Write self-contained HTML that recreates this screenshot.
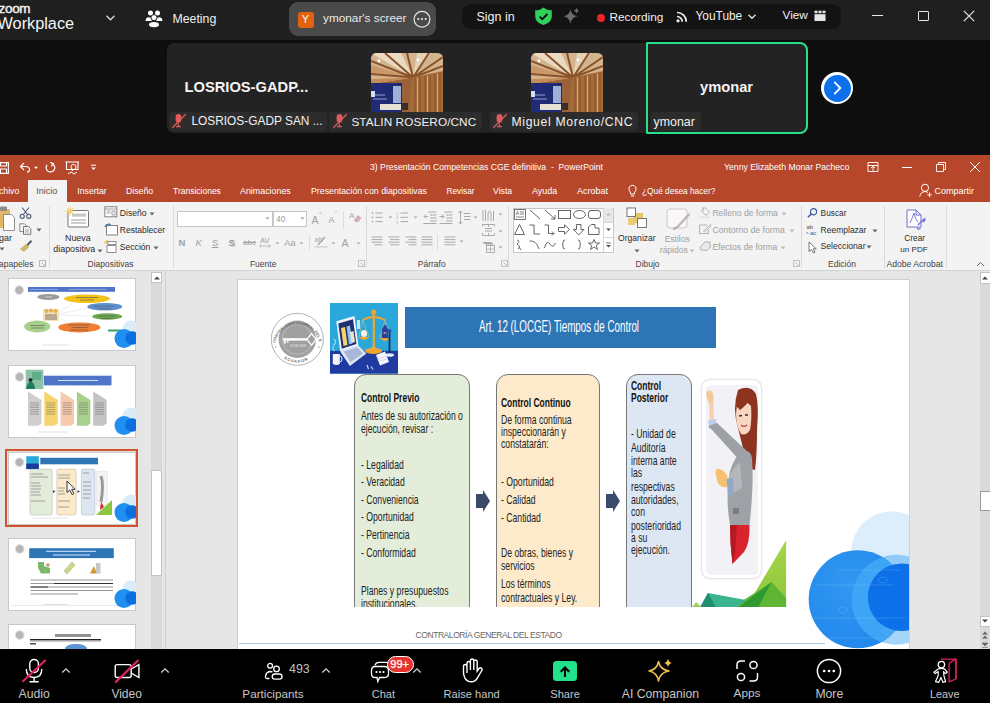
<!DOCTYPE html>
<html><head><meta charset="utf-8">
<style>
*{margin:0;padding:0;box-sizing:border-box}
html,body{width:990px;height:703px;overflow:hidden;background:#0e0e0e;font-family:"Liberation Sans",sans-serif}
.a{position:absolute}
.t{position:absolute;white-space:nowrap;line-height:1}
#top{left:0;top:0;width:990px;height:40px;background:#1f1f1f}
#gal{left:0;top:40px;width:990px;height:115px;background:#0e0e0e}
#ppt{left:0;top:155px;width:990px;height:494px;background:#e6e6e6;overflow:hidden}
#bot{left:0;top:649px;width:990px;height:54px;background:#000}
</style></head><body>
<div id="top" class="a">
  <div class="t" style="left:-1.5px;top:2px;font-size:13.5px;color:#f2f2f2;-webkit-text-stroke:0.45px #f2f2f2;letter-spacing:-0.3px">zoom</div>
  <div class="t" style="left:-2.5px;top:15px;font-size:16.3px;color:#f4f4f4">Workplace</div>
  <svg class="a" style="left:105px;top:14px" width="11" height="8" viewBox="0 0 11 8"><path d="M1.5 1.8 L5.5 5.8 L9.5 1.8" fill="none" stroke="#d8d8d8" stroke-width="1.3"/></svg>
  <svg class="a" style="left:144px;top:8px" width="20" height="22" viewBox="144 8 20 22">
    <circle cx="150.5" cy="12.9" r="2.5" fill="#fff"/><circle cx="157.5" cy="12.9" r="2.5" fill="#fff"/>
    <path d="M145.6 21 Q145.6 17.3 148.8 17.3 Q151.6 17.3 151.8 21Z" fill="#fff"/><path d="M156.2 21 Q156.4 17.3 159.2 17.3 Q162.4 17.3 162.4 21Z" fill="#fff"/>
    <circle cx="154" cy="17.6" r="3" fill="#fff" stroke="#1f1f1f" stroke-width="0.9"/>
    <ellipse cx="154" cy="24.6" rx="5" ry="2.6" fill="#fff"/>
  </svg>
  <div class="t" style="left:172.5px;top:12.8px;font-size:12.3px;color:#f0f0f0">Meeting</div>
  <div class="a" style="left:289px;top:2px;width:147px;height:33.5px;background:#4a4a4a;border-radius:9px"></div>
  <div class="a" style="left:297.5px;top:12px;width:16px;height:15.5px;background:#e4620f;border-radius:3px;color:#fff;font-size:11px;text-align:center;line-height:15.5px">Y</div>
  <div class="t" style="left:323px;top:13px;font-size:11.8px;color:#e8e8e8">ymonar's screer</div>
  <svg class="a" style="left:412px;top:9px" width="20" height="20" viewBox="0 0 20 20"><circle cx="10" cy="10.3" r="7.9" fill="none" stroke="#e6e6e6" stroke-width="1.2"/><circle cx="6.3" cy="10" r="1.1" fill="#e6e6e6"/><circle cx="10" cy="10" r="1.1" fill="#e6e6e6"/><circle cx="13.7" cy="10" r="1.1" fill="#e6e6e6"/></svg>
  <div class="a" style="left:462px;top:4px;width:379px;height:25.3px;background:#131313;border-radius:9px"></div>
  <div class="t" style="left:476.5px;top:11px;font-size:12.5px;color:#f0f0f0">Sign in</div>
  <svg class="a" style="left:534px;top:7px" width="19" height="19" viewBox="0 0 19 19"><path d="M9.5 0.5 C7 2.5 4.5 3.3 1.2 3.3 L1.2 9 C1.2 13.5 4.5 16.5 9.5 18 C14.5 16.5 17.8 13.5 17.8 9 L17.8 3.3 C14.5 3.3 12 2.5 9.5 0.5Z" fill="#2ed15a"/><path d="M5.6 9.6 L8.3 12.2 L13.4 7" fill="none" stroke="#101010" stroke-width="1.9"/></svg>
  <svg class="a" style="left:562px;top:7px" width="19" height="19" viewBox="0 0 19 19"><path d="M8.4 2.5 Q9.4 8.3 15.4 9.3 Q9.4 10.3 8.4 16.8 Q7.4 10.3 1.4 9.3 Q7.4 8.3 8.4 2.5Z" fill="#6c6c6c"/><path d="M14.5 0.8 Q15 3.2 17.2 3.7 Q15 4.2 14.5 6.6 Q14 4.2 11.8 3.7 Q14 3.2 14.5 0.8Z" fill="#6c6c6c"/></svg>
  <div class="a" style="left:597px;top:14px;width:8px;height:8px;border-radius:50%;background:#e8262b"></div>
  <div class="t" style="left:609.5px;top:11.7px;font-size:11.8px;color:#f0f0f0">Recording</div>
  <svg class="a" style="left:676px;top:11px" width="13" height="12" viewBox="0 0 13 12"><circle cx="2" cy="9.8" r="1.6" fill="#eee"/><path d="M1 5.5 A5.3 5.3 0 0 1 6.3 10.8" fill="none" stroke="#eee" stroke-width="1.7"/><path d="M1 1.5 A9.3 9.3 0 0 1 10.3 10.8" fill="none" stroke="#eee" stroke-width="1.7"/></svg>
  <div class="t" style="left:695.5px;top:10.5px;font-size:11.9px;color:#f0f0f0">YouTube</div>
  <svg class="a" style="left:747px;top:13px" width="10" height="8" viewBox="0 0 10 8"><path d="M1.5 1.8 L5 5.3 L8.5 1.8" fill="none" stroke="#e6e6e6" stroke-width="1.3"/></svg>
  <div class="t" style="left:782.5px;top:10px;font-size:11.8px;color:#f0f0f0">View</div>
  <svg class="a" style="left:814px;top:10px" width="12" height="12" viewBox="0 0 12 12"><rect x="0.5" y="0.7" width="3" height="2.5" fill="#e6e6e6"/><rect x="4.5" y="0.7" width="3" height="2.5" fill="#e6e6e6"/><rect x="8.5" y="0.7" width="3" height="2.5" fill="#e6e6e6"/><rect x="0.5" y="4.2" width="11" height="6.8" fill="#e6e6e6"/></svg>
  <div class="a" style="left:872px;top:15px;width:10.5px;height:1.3px;background:#e6e6e6"></div>
  <div class="a" style="left:918px;top:11px;width:10.5px;height:10px;border:1.2px solid #e6e6e6;border-radius:1px"></div>
  <svg class="a" style="left:963px;top:10px" width="12" height="12" viewBox="0 0 12 12"><path d="M0.8 0.8 L11.2 11.2 M11.2 0.8 L0.8 11.2" stroke="#e6e6e6" stroke-width="1.2"/></svg>
</div>
<div id="gal" class="a">
  <div class="a" style="left:167px;top:3px;width:641px;height:90px;background:#232323;border-radius:7px"></div>
  <div class="t" style="left:184.5px;top:39.5px;font-size:14.7px;font-weight:bold;color:#f4f4f4">LOSRIOS-GADP...</div>
  <svg class="a" style="left:371px;top:12.5px" width="72" height="60" viewBox="0 0 72 60">
  <defs><clipPath id="pc371"><path d="M0 6 Q0 0 6 0 H66 Q72 0 72 6 V60 H0Z"/></clipPath></defs>
  <g clip-path="url(#pc371)">
  <rect width="72" height="60" fill="#9a6236"/>
  <path d="M0 0 H72 V20 L42 24.5 L0 31Z" fill="#d4b48e"/>
  <path d="M42 24.5 L0 0 H30Z" fill="#eadac2"/><path d="M42 24.5 L46 0 H60Z" fill="#e6d2b6"/>
  <path d="M42 24.5 L0 12 V20Z" fill="#c99a68"/><path d="M42 24.5 L0 26 V31Z" fill="#c48c58"/>
  <g stroke="#8a532a" stroke-width="2"><path d="M42 24.5 L14 0 M42 24.5 L36 0 M42 24.5 L58 0 M42 24.5 L72 4 M42 24.5 L72 13 M42 24.5 L0 8 M42 24.5 L0 21"/></g>
  <path d="M41 24.5 L72 18 V60 H38Z" fill="#a56b3a"/>
  <path d="M44 25 V60 M49 24 V60 M54 23 V60 M59 22 V60 M64 21 V60 M69 20 V60" stroke="#8a552b" stroke-width="1.2"/>
  <path d="M46.5 24.5 V60 M56.5 23 V60 M66.5 20.5 V60" stroke="#d9ad7a" stroke-width="0.9"/>
  <rect x="0" y="30" width="31" height="30" fill="#1f2b72"/>
  <rect x="22" y="33" width="8" height="17" fill="#9fb0d8"/>
  <path d="M2 42 H14 M2 46 H16" stroke="#8fa0d8" stroke-width="1"/>
  <rect x="0" y="38" width="4" height="6" fill="#d8def0"/>
  <rect x="9" y="51" width="21" height="6" fill="#e6e0d4"/>
  <rect x="31" y="50" width="6" height="7" fill="#3a2e28"/>
  <circle cx="8" cy="8" r="1.4" fill="#fff"/><circle cx="47" cy="7" r="1.4" fill="#fff"/>
  </g></svg>
  <svg class="a" style="left:531px;top:12.5px" width="72" height="60" viewBox="0 0 72 60">
  <defs><clipPath id="pc531"><path d="M0 6 Q0 0 6 0 H66 Q72 0 72 6 V60 H0Z"/></clipPath></defs>
  <g clip-path="url(#pc531)">
  <rect width="72" height="60" fill="#9a6236"/>
  <path d="M0 0 H72 V20 L42 24.5 L0 31Z" fill="#d4b48e"/>
  <path d="M42 24.5 L0 0 H30Z" fill="#eadac2"/><path d="M42 24.5 L46 0 H60Z" fill="#e6d2b6"/>
  <path d="M42 24.5 L0 12 V20Z" fill="#c99a68"/><path d="M42 24.5 L0 26 V31Z" fill="#c48c58"/>
  <g stroke="#8a532a" stroke-width="2"><path d="M42 24.5 L14 0 M42 24.5 L36 0 M42 24.5 L58 0 M42 24.5 L72 4 M42 24.5 L72 13 M42 24.5 L0 8 M42 24.5 L0 21"/></g>
  <path d="M41 24.5 L72 18 V60 H38Z" fill="#a56b3a"/>
  <path d="M44 25 V60 M49 24 V60 M54 23 V60 M59 22 V60 M64 21 V60 M69 20 V60" stroke="#8a552b" stroke-width="1.2"/>
  <path d="M46.5 24.5 V60 M56.5 23 V60 M66.5 20.5 V60" stroke="#d9ad7a" stroke-width="0.9"/>
  <rect x="0" y="30" width="31" height="30" fill="#1f2b72"/>
  <rect x="22" y="33" width="8" height="17" fill="#9fb0d8"/>
  <path d="M2 42 H14 M2 46 H16" stroke="#8fa0d8" stroke-width="1"/>
  <rect x="0" y="38" width="4" height="6" fill="#d8def0"/>
  <rect x="9" y="51" width="21" height="6" fill="#e6e0d4"/>
  <rect x="31" y="50" width="6" height="7" fill="#3a2e28"/>
  <circle cx="8" cy="8" r="1.4" fill="#fff"/><circle cx="47" cy="7" r="1.4" fill="#fff"/>
  </g></svg>
  <div class="a" style="left:646px;top:2px;width:162px;height:91.5px;border:2px solid #27e08c;border-radius:1px 8px 8px 1px;background:#232323"></div>
  <div class="t" style="left:700px;top:40px;font-size:14.7px;font-weight:bold;color:#f4f4f4">ymonar</div>
  <div class="a" style="left:168.5px;top:71.5px;width:158.5px;height:19.5px;background:#2c2c2c;border-radius:4px"></div>
  <div class="a" style="left:329px;top:71.5px;width:153px;height:19.5px;background:#2c2c2c;border-radius:4px"></div>
  <div class="a" style="left:489.5px;top:71.5px;width:148px;height:19.5px;background:#2c2c2c;border-radius:4px"></div>
  <div class="a" style="left:650.5px;top:71.5px;width:50px;height:19.5px;background:#2c2c2c;border-radius:4px"></div>
  <svg class="a" style="left:172px;top:73px" width="15" height="16" viewBox="0 0 15 16"><rect x="3.6" y="1" width="5.7" height="8.6" rx="2.85" fill="#e25b5b"/><path d="M6.45 10.5 V13.2 M4 13.6 H8.9" stroke="#e25b5b" stroke-width="1.3"/><path d="M0.4 14.8 L13.6 1.2" stroke="#e25b5b" stroke-width="1.3"/></svg>
  <div class="t" style="left:191.4px;top:76.2px;font-size:11.9px;color:#f0f0f0">LOSRIOS-GADP SAN ...</div>
  <svg class="a" style="left:333px;top:73px" width="15" height="16" viewBox="0 0 15 16"><rect x="3.6" y="1" width="5.7" height="8.6" rx="2.85" fill="#e25b5b"/><path d="M6.45 10.5 V13.2 M4 13.6 H8.9" stroke="#e25b5b" stroke-width="1.3"/><path d="M0.4 14.8 L13.6 1.2" stroke="#e25b5b" stroke-width="1.3"/></svg>
  <div class="t" style="left:351.4px;top:76.2px;font-size:11.75px;letter-spacing:0.1px;color:#f0f0f0">STALIN ROSERO/CNC</div>
  <svg class="a" style="left:493px;top:73px" width="15" height="16" viewBox="0 0 15 16"><rect x="3.6" y="1" width="5.7" height="8.6" rx="2.85" fill="#e25b5b"/><path d="M6.45 10.5 V13.2 M4 13.6 H8.9" stroke="#e25b5b" stroke-width="1.3"/><path d="M0.4 14.8 L13.6 1.2" stroke="#e25b5b" stroke-width="1.3"/></svg>
  <div class="t" style="left:511.5px;top:76px;font-size:12.2px;letter-spacing:0.66px;color:#f0f0f0">Miguel Moreno/CNC</div>
  <div class="t" style="left:653.5px;top:76px;font-size:12.4px;color:#f0f0f0">ymonar</div>
  <div class="a" style="left:821px;top:32px;width:32px;height:32px;border-radius:50%;background:#fff"></div>
  <div class="a" style="left:823.5px;top:34.5px;width:27px;height:27px;border-radius:50%;background:#0e71eb"></div>
  <svg class="a" style="left:821px;top:32px" width="32" height="32" viewBox="0 0 32 32"><path d="M13.3 9.8 L19.3 16 L13.3 22.2" fill="none" stroke="#fff" stroke-width="1.8"/></svg>
</div>
<div id="ppt" class="a">
  <div class="a" style="left:0;top:0;width:990px;height:47px;background:#b7472a"></div>
  <!-- title bar icons -->
  <svg class="a" style="left:-2px;top:7px" width="12" height="12" viewBox="0 0 12 12"><path d="M0.6 0.6 H10.4 V11.4 H0.6Z M2.5 0.6 V4 H8.5 V0.6 M2.5 11.4 V7 H8.5 V11.4" fill="none" stroke="#fff" stroke-width="1.1"/></svg>
  <svg class="a" style="left:19px;top:7px" width="21" height="11" viewBox="0 0 21 11"><path d="M5 1 L1.5 4.5 L5 8 M1.5 4.5 H6.5 Q10.5 4.5 10.5 7.5 Q10.5 10 8 10.2" fill="none" stroke="#fff" stroke-width="1.2"/><path d="M15 4.8 H19 L17 7Z" fill="#fff"/></svg>
  <svg class="a" style="left:44px;top:7px" width="12" height="11" viewBox="0 0 12 11"><path d="M7.5 1.5 A4.3 4.3 0 1 1 3.2 2.8" fill="none" stroke="#fff" stroke-width="1.2"/><path d="M6 0.3 L9.5 1.5 L7.2 4.3" fill="none" stroke="#fff" stroke-width="1.1"/></svg>
  <svg class="a" style="left:65px;top:6px" width="15" height="14" viewBox="0 0 15 14"><path d="M0.5 1 H14 M1.5 1 V8.5 H13 V1 M7.3 8.5 V10" fill="none" stroke="#fff" stroke-width="1.1"/><circle cx="8.5" cy="6" r="2.6" fill="none" stroke="#fff" stroke-width="1"/><path d="M3 13 L6 11 L9 13 L12 11" fill="none" stroke="#fff" stroke-width="1"/></svg>
  <svg class="a" style="left:90px;top:9px" width="7" height="7" viewBox="0 0 7 7"><path d="M1 1.2 H6" stroke="#fff" stroke-width="1"/><path d="M1.2 3.5 H5.8 L3.5 6Z" fill="#fff"/></svg>
  <div class="t" style="left:370px;top:7.6px;font-size:8.66px;color:#fff">3) Presentación Competencias CGE definitiva &nbsp;- &nbsp;PowerPoint</div>
  <div class="t" style="left:724px;top:7.5px;font-size:8.7px;color:#fff">Yenny Elizabeth Monar Pacheco</div>
  <svg class="a" style="left:867px;top:6px" width="12" height="12" viewBox="0 0 12 12"><path d="M1 1.5 H11 V10.5 H1Z M1 4.5 H11 M6 4.5 V10.5 M4 7 L6 5.3 L8 7" fill="none" stroke="#fff" stroke-width="0.9"/></svg>
  <div class="a" style="left:902px;top:12px;width:10px;height:1px;background:#fff"></div>
  <svg class="a" style="left:935px;top:6px" width="12" height="12" viewBox="0 0 12 12"><path d="M1.5 3.5 H8.5 V10.5 H1.5Z M3.5 3.5 V1.5 H10.5 V8.5 H8.5" fill="none" stroke="#fff" stroke-width="0.9"/></svg>
  <svg class="a" style="left:969px;top:6px" width="12" height="12" viewBox="0 0 12 12"><path d="M1 1 L11 11 M11 1 L1 11" stroke="#fff" stroke-width="1"/></svg>
  <!-- tabs -->
  <div class="a" style="left:27.5px;top:25px;width:39px;height:23px;background:#f3f3f3"></div>
  <div class="t" style="left:-1px;top:32px;font-size:8.7px;color:#fff">chivo</div>
  <div class="t" style="left:36.3px;top:32px;font-size:9px;color:#555">Inicio</div>
  <div class="t" style="left:77.3px;top:32px;font-size:8.7px;color:#fff">Insertar</div>
  <div class="t" style="left:126px;top:32px;font-size:8.7px;color:#fff">Diseño</div>
  <div class="t" style="left:173px;top:32px;font-size:8.5px;color:#fff">Transiciones</div>
  <div class="t" style="left:240px;top:32px;font-size:8.9px;color:#fff">Animaciones</div>
  <div class="t" style="left:311px;top:32px;font-size:8.77px;color:#fff">Presentación con diapositivas</div>
  <div class="t" style="left:446.5px;top:32px;font-size:8.3px;color:#fff">Revisar</div>
  <div class="t" style="left:493px;top:32px;font-size:8.7px;color:#fff">Vista</div>
  <div class="t" style="left:532px;top:32px;font-size:9px;color:#fff">Ayuda</div>
  <div class="t" style="left:577px;top:32px;font-size:9px;color:#fff">Acrobat</div>
  <svg class="a" style="left:628px;top:29px" width="9" height="14" viewBox="0 0 9 14"><path d="M2.6 10 Q2.6 8 1.3 6.5 A3.6 3.6 0 1 1 7.7 6.5 Q6.4 8 6.4 10Z M2.8 12 H6.2" fill="none" stroke="#fff" stroke-width="1"/></svg>
  <div class="t" style="left:642px;top:32px;font-size:8.3px;color:#fff">¿Qué desea hacer?</div>
  <svg class="a" style="left:919px;top:28px" width="14" height="15" viewBox="0 0 14 15"><circle cx="6" cy="4.8" r="3.6" fill="none" stroke="#fff" stroke-width="1"/><path d="M0.8 13.5 Q1.5 8.8 6 8.6 Q8 8.6 9 9.5 M10.5 9.5 V14 M8.3 11.8 H12.7" fill="none" stroke="#fff" stroke-width="1"/></svg>
  <div class="t" style="left:934.6px;top:32px;font-size:9px;color:#fff">Compartir</div>
  <div class="a" style="left:0;top:47px;width:990px;height:69px;background:#f3f3f3;border-bottom:1px solid #d4d4d4"></div>
<div class="a" style="left:49px;top:51px;width:1px;height:62px;background:#dadada"></div>
<div class="a" style="left:172.5px;top:51px;width:1.0px;height:62px;background:#dadada"></div>
<div class="a" style="left:365.5px;top:51px;width:1.0px;height:62px;background:#dadada"></div>
<div class="a" style="left:507.5px;top:51px;width:1.0px;height:62px;background:#dadada"></div>
<div class="a" style="left:800.5px;top:51px;width:1.0px;height:62px;background:#dadada"></div>
<div class="a" style="left:883.5px;top:51px;width:1.0px;height:62px;background:#dadada"></div>
<div class="a" style="left:945.5px;top:51px;width:1.0px;height:62px;background:#dadada"></div>
<svg class="a" style="left:-4px;top:50px;" width="19" height="27" viewBox="0 0 19 27"><rect x="1" y="4" width="13" height="19" rx="1" fill="#e2b866"/><rect x="4" y="1.5" width="7" height="4.5" rx="1" fill="#8a8a8a"/><path d="M7.5 9.5 H15.5 L18.5 12.5 V25.5 H7.5Z" fill="#fff" stroke="#777" stroke-width="0.8"/></svg>
<div class="t" style="left:-1.0px;top:79.4px;font-size:9px;color:#2b2b2b;">gar</div>
<svg class="a" style="left:-1px;top:92px;" width="6" height="4" viewBox="0 0 6 4"><path d="M0.5 0.5 H5.5 L3 3.5Z" fill="#666"/></svg>
<svg class="a" style="left:19px;top:52px;" width="13" height="12" viewBox="0 0 13 12"><path d="M3 0.5 L9 8 M10 0.5 L4 8" stroke="#4b5a72" stroke-width="1.1"/><circle cx="3.2" cy="9.3" r="2.1" fill="none" stroke="#4b5a72" stroke-width="1.1"/><circle cx="9.8" cy="9.3" r="2.1" fill="none" stroke="#4b5a72" stroke-width="1.1"/></svg>
<svg class="a" style="left:19px;top:68px;" width="13" height="12" viewBox="0 0 13 12"><path d="M0.8 0.8 H5.5 L7 2.3 V8.5 H0.8Z" fill="#f8f8f8" stroke="#777" stroke-width="0.8"/><path d="M4.5 3.5 H9.5 L11.8 5.8 V11.3 H4.5Z" fill="#f8f8f8" stroke="#666" stroke-width="0.9"/><path d="M6 7 H10 M6 9 H10" stroke="#777" stroke-width="0.7"/></svg>
<svg class="a" style="left:35.5px;top:72.5px;" width="6" height="4" viewBox="0 0 6 4"><path d="M0.5 0.5 H5.5 L3 3.5Z" fill="#666"/></svg>
<svg class="a" style="left:19px;top:85px;" width="14" height="13" viewBox="0 0 14 13"><path d="M12.5 0.8 L8 5.5" stroke="#5a5a6a" stroke-width="2"/><path d="M7 4 L10 7 L5 12 L1 9Z" fill="#cdb866"/></svg>
<div class="t" style="left:-1.0px;top:104.8px;font-size:8.5px;color:#444;">apapeles</div>
<svg class="a" style="left:39px;top:105px;" width="7" height="7" viewBox="0 0 7 7"><path d="M0.5 0.5 H6.5 V6.5 H0.5Z" fill="none" stroke="#999" stroke-width="0.7"/><path d="M2.5 2.5 L6 6" stroke="#999" stroke-width="0.8"/></svg>
<svg class="a" style="left:64px;top:51px;" width="26" height="22" viewBox="0 0 26 22"><rect x="4" y="4.5" width="20.5" height="16.5" rx="1" fill="#fff" stroke="#777" stroke-width="1"/><rect x="8" y="7.5" width="14" height="3.2" fill="#c8c8c8"/><path d="M7 14 H22 M7 17 H22" stroke="#999" stroke-width="1"/><g stroke="#f5c04a" stroke-width="0.9"><path d="M6 0.5 V9.5 M1.5 5 H10.5 M2.8 1.8 L9.2 8.2 M9.2 1.8 L2.8 8.2"/></g><circle cx="6" cy="5" r="2.2" fill="#f8d36a"/></svg>
<div class="t" style="left:65.0px;top:79.0px;font-size:8.9px;color:#2b2b2b;">Nueva</div>
<div class="t" style="left:53.3px;top:90.0px;font-size:8.9px;color:#2b2b2b;">diapositiva</div>
<svg class="a" style="left:97px;top:93.5px;" width="6" height="4" viewBox="0 0 6 4"><path d="M0.5 0.5 H5.5 L3 3.5Z" fill="#666"/></svg>
<svg class="a" style="left:104px;top:51px;" width="14" height="12" viewBox="0 0 14 12"><rect x="0.8" y="0.8" width="12" height="10" fill="#fff" stroke="#777" stroke-width="0.9"/><path d="M0.8 3 H12.8 M2.5 5 H6.5 M2.5 7 H6.5 M8 5 H11 V9 H8Z" stroke="#888" stroke-width="0.8" fill="none"/></svg>
<div class="t" style="left:119.8px;top:54.0px;font-size:8.6px;color:#2b2b2b;">Diseño</div>
<svg class="a" style="left:148.5px;top:57px;" width="6" height="4" viewBox="0 0 6 4"><path d="M0.5 0.5 H5.5 L3 3.5Z" fill="#666"/></svg>
<svg class="a" style="left:104px;top:68px;" width="14" height="13" viewBox="0 0 14 13"><rect x="2.5" y="2.5" width="11" height="9.5" fill="#fff" stroke="#777" stroke-width="0.9"/><path d="M1 4 Q2 0.5 6 1.5" fill="none" stroke="#3d6fb6" stroke-width="1.1"/><path d="M5 0 L6.5 1.7 L4.6 3" fill="none" stroke="#3d6fb6" stroke-width="0.9"/></svg>
<div class="t" style="left:119.8px;top:71.3px;font-size:8.5px;color:#2b2b2b;">Restablecer</div>
<svg class="a" style="left:104px;top:85px;" width="14" height="13" viewBox="0 0 14 13"><path d="M0.5 2 L4 0.5 M0.5 3 H4" stroke="#f0b400" stroke-width="1"/><rect x="4" y="1.5" width="8" height="3" fill="#fff" stroke="#777" stroke-width="0.8"/><rect x="3" y="5.5" width="9" height="7" fill="#fff" stroke="#777" stroke-width="0.8"/></svg>
<div class="t" style="left:119.8px;top:87.7px;font-size:8.6px;color:#2b2b2b;">Sección</div>
<svg class="a" style="left:152.5px;top:91px;" width="6" height="4" viewBox="0 0 6 4"><path d="M0.5 0.5 H5.5 L3 3.5Z" fill="#666"/></svg>
<div class="t" style="left:87.6px;top:104.8px;font-size:8.5px;color:#444;">Diapositivas</div>
<div class="a" style="left:176.5px;top:55.5px;width:96.5px;height:16.5px;background:#fff;border:1px solid #c6c6c6"></div>
<div class="a" style="left:273px;top:55.5px;width:34px;height:16.5px;background:#fff;border:1px solid #c6c6c6"></div>
<svg class="a" style="left:265px;top:62px;" width="5" height="3" viewBox="0 0 5 3"><path d="M0.5 0.5 H4.5 L2.5 2.5Z" fill="#999"/></svg>
<svg class="a" style="left:299.5px;top:62px;" width="5" height="3" viewBox="0 0 5 3"><path d="M0.5 0.5 H4.5 L2.5 2.5Z" fill="#999"/></svg>
<div class="t" style="left:276.0px;top:59.8px;font-size:8.5px;color:#a0a0a0;">40</div>
<div class="t" style="left:311.5px;top:60.1px;font-size:10.5px;color:#a0a0a0;">A</div>
<div class="t" style="left:319.0px;top:55.9px;font-size:6px;color:#a0a0a0;">^</div>
<div class="t" style="left:328.5px;top:61.4px;font-size:9px;color:#a0a0a0;">A</div>
<div class="t" style="left:335.0px;top:55.4px;font-size:6px;color:#a0a0a0;">ˇ</div>
<div class="a" style="left:343px;top:57px;width:1px;height:17px;background:#dcdcdc"></div>
<svg class="a" style="left:349px;top:55px;" width="13" height="13" viewBox="0 0 13 13"><text x="0" y="8" font-size="8" fill="#aaa" font-family="Liberation Sans">A</text><path d="M5 10 L9 5 L12.5 8 L9.5 12 H6Z" fill="#c8a0a8" opacity="0.8"/></svg>
<div class="t" style="left:178.5px;top:83.0px;font-size:9.5px;color:#a0a0a0;font-weight:bold;">N</div>
<div class="t" style="left:195.5px;top:83.0px;font-size:9.5px;color:#a0a0a0;font-style:italic">K</div>
<div class="t" style="left:212.0px;top:83.0px;font-size:9.5px;color:#a0a0a0;text-decoration:underline">S</div>
<div class="t" style="left:228.5px;top:83.0px;font-size:9.5px;color:#a0a0a0;font-weight:bold;text-shadow:1px 1px 0 #ccc">S</div>
<div class="t" style="left:243.0px;top:83.7px;font-size:8px;color:#a0a0a0;text-decoration:line-through">abc</div>
<div class="t" style="left:260.0px;top:81.7px;font-size:7.5px;color:#a0a0a0;">AV</div>
<svg class="a" style="left:259px;top:89px;" width="12" height="4" viewBox="0 0 12 4"><path d="M0.5 2 H11.5 M2.5 0.2 L0.5 2 L2.5 3.8 M9.5 0.2 L11.5 2 L9.5 3.8" fill="none" stroke="#aaa" stroke-width="0.7"/></svg>
<svg class="a" style="left:274.5px;top:86.5px;" width="5" height="3" viewBox="0 0 5 3"><path d="M0.5 0.5 H4.5 L2.5 2.5Z" fill="#aaa"/></svg>
<div class="t" style="left:284.0px;top:83.0px;font-size:9.5px;color:#a0a0a0;">Aa</div>
<svg class="a" style="left:299px;top:86.5px;" width="5" height="3" viewBox="0 0 5 3"><path d="M0.5 0.5 H4.5 L2.5 2.5Z" fill="#aaa"/></svg>
<div class="a" style="left:309px;top:80px;width:1px;height:15px;background:#dcdcdc"></div>
<svg class="a" style="left:313.5px;top:79px;" width="14" height="14" viewBox="0 0 14 14"><text x="0.5" y="8" font-size="7.5" fill="#aaa" font-family="Liberation Sans">ab</text><path d="M4 11 L11 3" stroke="#aaa" stroke-width="1.5"/><rect x="0.5" y="12" width="13" height="1.8" fill="#d8d8d8"/></svg>
<svg class="a" style="left:331px;top:86.5px;" width="5" height="3" viewBox="0 0 5 3"><path d="M0.5 0.5 H4.5 L2.5 2.5Z" fill="#aaa"/></svg>
<div class="t" style="left:341.5px;top:82.6px;font-size:10.5px;color:#a0a0a0;">A</div>
<svg class="a" style="left:356px;top:86.5px;" width="5" height="3" viewBox="0 0 5 3"><path d="M0.5 0.5 H4.5 L2.5 2.5Z" fill="#aaa"/></svg>
<div class="t" style="left:249.9px;top:104.8px;font-size:8.5px;color:#444;">Fuente</div>
<svg class="a" style="left:358px;top:105px;" width="7" height="7" viewBox="0 0 7 7"><path d="M0.5 0.5 H6.5 V6.5 H0.5Z" fill="none" stroke="#aaa" stroke-width="0.7"/><path d="M2.5 2.5 L6 6" stroke="#aaa" stroke-width="0.8"/></svg>
<svg class="a" style="left:371px;top:56px;" width="12" height="13" viewBox="0 0 12 13"><circle cx="1.5" cy="2.0" r="0.9" fill="#a9a9a9"/><path d="M4.5 2.0 H11.5" stroke="#a9a9a9" stroke-width="1"/><circle cx="1.5" cy="6.3" r="0.9" fill="#a9a9a9"/><path d="M4.5 6.3 H11.5" stroke="#a9a9a9" stroke-width="1"/><circle cx="1.5" cy="10.6" r="0.9" fill="#a9a9a9"/><path d="M4.5 10.6 H11.5" stroke="#a9a9a9" stroke-width="1"/></svg>
<svg class="a" style="left:388px;top:61px;" width="5" height="3" viewBox="0 0 5 3"><path d="M0.5 0.5 H4.5 L2.5 2.5Z" fill="#a9a9a9"/></svg>
<svg class="a" style="left:396px;top:56px;" width="13" height="13" viewBox="0 0 13 13"><text x="0" y="4.0" font-size="4" fill="#a9a9a9" font-family="Liberation Sans">1</text><path d="M4.5 2.0 H12" stroke="#a9a9a9" stroke-width="1"/><text x="0" y="8.3" font-size="4" fill="#a9a9a9" font-family="Liberation Sans">2</text><path d="M4.5 6.3 H12" stroke="#a9a9a9" stroke-width="1"/><text x="0" y="12.6" font-size="4" fill="#a9a9a9" font-family="Liberation Sans">3</text><path d="M4.5 10.6 H12" stroke="#a9a9a9" stroke-width="1"/></svg>
<svg class="a" style="left:413px;top:61px;" width="5" height="3" viewBox="0 0 5 3"><path d="M0.5 0.5 H4.5 L2.5 2.5Z" fill="#a9a9a9"/></svg>
<svg class="a" style="left:423px;top:56px;" width="14" height="13" viewBox="0 0 14 13"><path d="M5 1 H13.5 M7 4 H13.5 M7 7 H13.5 M7 10 H13.5 M0.5 12.5 H13.5" stroke="#a9a9a9" stroke-width="1"/><path d="M5 5.5 L1 5.5 M3 3.5 L1 5.5 L3 7.5" fill="none" stroke="#a9a9a9" stroke-width="1"/></svg>
<svg class="a" style="left:439px;top:56px;" width="14" height="13" viewBox="0 0 14 13"><path d="M5 1 H13.5 M7 4 H13.5 M7 7 H13.5 M7 10 H13.5 M0.5 12.5 H13.5" stroke="#a9a9a9" stroke-width="1"/><path d="M0.5 5.5 L5 5.5 M3 3.5 L5 5.5 L3 7.5" fill="none" stroke="#a9a9a9" stroke-width="1"/></svg>
<svg class="a" style="left:458px;top:55px;" width="13" height="15" viewBox="0 0 13 15"><path d="M2.5 1 V14 M0.5 3 L2.5 1 L4.5 3 M0.5 12 L2.5 14 L4.5 12 M6 3.5 H12.5 M6 6.5 H12.5 M6 9.5 H12.5" fill="none" stroke="#a9a9a9" stroke-width="1"/></svg>
<svg class="a" style="left:473px;top:61px;" width="5" height="3" viewBox="0 0 5 3"><path d="M0.5 0.5 H4.5 L2.5 2.5Z" fill="#a9a9a9"/></svg>
<svg class="a" style="left:482px;top:53px;" width="13" height="14" viewBox="0 0 13 14"><path d="M1 2 V13 M3.5 2 V13 M6 5 V13 M9 5 V13 M6 5 Q7.5 1 9 5 M11.5 3 V13" fill="none" stroke="#a9a9a9" stroke-width="1"/></svg>
<svg class="a" style="left:498px;top:58px;" width="5" height="3" viewBox="0 0 5 3"><path d="M0.5 0.5 H4.5 L2.5 2.5Z" fill="#a9a9a9"/></svg>
<svg class="a" style="left:482px;top:69px;" width="13" height="12" viewBox="0 0 13 12"><path d="M0.5 2.5 V0.5 H12.5 V2.5 M0.5 9 V11.5 H12.5 V9 M3 4.5 H10 M3 7 H10 M6.5 1 V3 M6.5 9 V11" fill="none" stroke="#a9a9a9" stroke-width="1"/></svg>
<svg class="a" style="left:498px;top:74.5px;" width="5" height="3" viewBox="0 0 5 3"><path d="M0.5 0.5 H4.5 L2.5 2.5Z" fill="#a9a9a9"/></svg>
<svg class="a" style="left:482px;top:85px;" width="13" height="13" viewBox="0 0 13 13"><path d="M0.5 2 H9 L12 4.5 H3Z" fill="#a9a9a9"/><rect x="4.5" y="5.5" width="8" height="7" fill="none" stroke="#a9a9a9" stroke-width="0.9"/><path d="M8.5 5.5 V12.5 M4.5 9 H12.5" stroke="#a9a9a9" stroke-width="0.7"/></svg>
<svg class="a" style="left:498px;top:91px;" width="5" height="3" viewBox="0 0 5 3"><path d="M0.5 0.5 H4.5 L2.5 2.5Z" fill="#a9a9a9"/></svg>
<svg class="a" style="left:371px;top:81px;" width="12" height="10" viewBox="0 0 12 10"><path d="M0.5 1.0 H11.5" stroke="#a9a9a9" stroke-width="1"/><path d="M0.5 3.6 H11.5" stroke="#a9a9a9" stroke-width="1"/><path d="M0.5 6.2 H11.5" stroke="#a9a9a9" stroke-width="1"/><path d="M3.5 8.8 H11.5" stroke="#a9a9a9" stroke-width="1"/></svg>
<svg class="a" style="left:388px;top:81px;" width="12" height="10" viewBox="0 0 12 10"><path d="M0.5 1.0 H11.5" stroke="#a9a9a9" stroke-width="1"/><path d="M2.0 3.6 H11.5" stroke="#a9a9a9" stroke-width="1"/><path d="M0.5 6.2 H11.5" stroke="#a9a9a9" stroke-width="1"/><path d="M2.0 8.8 H11.5" stroke="#a9a9a9" stroke-width="1"/></svg>
<svg class="a" style="left:404.5px;top:81px;" width="12" height="10" viewBox="0 0 12 10"><path d="M0.5 1.0 H11.5" stroke="#a9a9a9" stroke-width="1"/><path d="M3.5 3.6 H11.5" stroke="#a9a9a9" stroke-width="1"/><path d="M0.5 6.2 H11.5" stroke="#a9a9a9" stroke-width="1"/><path d="M3.5 8.8 H11.5" stroke="#a9a9a9" stroke-width="1"/></svg>
<svg class="a" style="left:421px;top:81px;" width="12" height="10" viewBox="0 0 12 10"><path d="M0.5 1.0 H11.5" stroke="#a9a9a9" stroke-width="1"/><path d="M0.5 3.6 H11.5" stroke="#a9a9a9" stroke-width="1"/><path d="M0.5 6.2 H11.5" stroke="#a9a9a9" stroke-width="1"/><path d="M0.5 8.8 H11.5" stroke="#a9a9a9" stroke-width="1"/></svg>
<div class="a" style="left:437px;top:79px;width:1px;height:16px;background:#dcdcdc"></div>
<svg class="a" style="left:443.5px;top:81px;" width="12" height="10" viewBox="0 0 12 10"><path d="M0.5 1.0 H11.5" stroke="#a9a9a9" stroke-width="1"/><path d="M0.5 3.6 H11.5" stroke="#a9a9a9" stroke-width="1"/><path d="M0.5 6.2 H11.5" stroke="#a9a9a9" stroke-width="1"/><path d="M0.5 8.8 H11.5" stroke="#a9a9a9" stroke-width="1"/></svg>
<svg class="a" style="left:458.5px;top:85px;" width="5" height="3" viewBox="0 0 5 3"><path d="M0.5 0.5 H4.5 L2.5 2.5Z" fill="#a9a9a9"/></svg>
<div class="t" style="left:417.8px;top:104.8px;font-size:8.5px;color:#444;">Párrafo</div>
<svg class="a" style="left:501px;top:105px;" width="7" height="7" viewBox="0 0 7 7"><path d="M0.5 0.5 H6.5 V6.5 H0.5Z" fill="none" stroke="#aaa" stroke-width="0.7"/><path d="M2.5 2.5 L6 6" stroke="#aaa" stroke-width="0.8"/></svg>
<div class="a" style="left:513px;top:52.5px;width:101px;height:45.5px;background:#fff;border:1px solid #c6c6c6"></div>
<div class="a" style="left:603px;top:53px;width:1px;height:44px;background:#d6d6d6"></div>
<div class="a" style="left:604px;top:53px;width:9px;height:14px;background:#e8e8e8"></div>
<div class="a" style="left:604px;top:67px;width:9px;height:1px;background:#d6d6d6"></div>
<div class="a" style="left:604px;top:82px;width:9px;height:1px;background:#d6d6d6"></div>
<svg class="a" style="left:604px;top:56px;" width="9" height="6" viewBox="0 0 9 6"><path d="M2 4.5 H7 L4.5 2Z" fill="#bbb"/></svg>
<svg class="a" style="left:604px;top:72px;" width="9" height="6" viewBox="0 0 9 6"><path d="M2 1.5 H7 L4.5 4Z" fill="#555"/></svg>
<svg class="a" style="left:604px;top:87px;" width="9" height="8" viewBox="0 0 9 8"><path d="M2 1 H7" stroke="#555" stroke-width="0.8"/><path d="M2 3 H7 L4.5 5.5Z" fill="#555"/></svg>
<svg class="a" style="left:513.8px;top:54.0px;" width="13" height="12" viewBox="0 0 13 12"><rect x="0.5" y="0.5" width="11" height="10" fill="none" stroke="#555" stroke-width="0.8"/><text x="1.5" y="6" font-size="5.5" fill="#555" font-family="Liberation Sans">A</text><path d="M6 3 H10 M6 5 H10 M2 8 H10" stroke="#555" stroke-width="0.7"/></svg>
<svg class="a" style="left:529.2px;top:54.0px;" width="13" height="12" viewBox="0 0 13 12"><path d="M1 1 L11 10" stroke="#555" stroke-width="0.9"/></svg>
<svg class="a" style="left:544.2px;top:54.0px;" width="13" height="12" viewBox="0 0 13 12"><path d="M1 1 L11 10 M11 6 V10 H7" fill="none" stroke="#555" stroke-width="0.9"/></svg>
<svg class="a" style="left:558.3px;top:54.0px;" width="13" height="12" viewBox="0 0 13 12"><rect x="0.5" y="1.5" width="12" height="8" fill="none" stroke="#555" stroke-width="0.9"/></svg>
<svg class="a" style="left:573.1px;top:54.0px;" width="13" height="12" viewBox="0 0 13 12"><ellipse cx="6.5" cy="5.5" rx="6" ry="4" fill="none" stroke="#555" stroke-width="0.9"/></svg>
<svg class="a" style="left:588.2px;top:54.0px;" width="13" height="12" viewBox="0 0 13 12"><rect x="0.5" y="1.5" width="12" height="8" rx="2.5" fill="none" stroke="#555" stroke-width="0.9"/></svg>
<svg class="a" style="left:513.8px;top:69.4px;" width="13" height="12" viewBox="0 0 13 12"><path d="M5.5 0.5 L10.5 10.5 H0.5Z" fill="none" stroke="#555" stroke-width="0.9"/></svg>
<svg class="a" style="left:529.2px;top:69.4px;" width="13" height="12" viewBox="0 0 13 12"><path d="M0.5 1 H5 V10 H11" fill="none" stroke="#555" stroke-width="0.9"/></svg>
<svg class="a" style="left:544.2px;top:69.4px;" width="13" height="12" viewBox="0 0 13 12"><path d="M0.5 1 H4.5 V9.5 H10 M8 7.5 L10 9.5 L8 11.5" fill="none" stroke="#555" stroke-width="0.9"/></svg>
<svg class="a" style="left:558.3px;top:69.4px;" width="13" height="12" viewBox="0 0 13 12"><path d="M0.5 3.5 H6.5 V0.8 L11.5 5.5 L6.5 10.2 V7.5 H0.5Z" fill="none" stroke="#555" stroke-width="0.9"/></svg>
<svg class="a" style="left:573.1px;top:69.4px;" width="13" height="12" viewBox="0 0 13 12"><path d="M3.5 0.5 H8 V5.5 H11 L5.75 11 L0.5 5.5 H3.5Z" fill="none" stroke="#555" stroke-width="0.9"/></svg>
<svg class="a" style="left:588.2px;top:69.4px;" width="13" height="12" viewBox="0 0 13 12"><path d="M0.5 10.5 V3 L3.5 0.5 H7 V4 H11 V10.5Z" fill="none" stroke="#555" stroke-width="0.9"/></svg>
<svg class="a" style="left:513.8px;top:83.9px;" width="13" height="12" viewBox="0 0 13 12"><path d="M3 1 Q7 2 3 5 Q7 7 4 10 M5 8 L7 11" fill="none" stroke="#555" stroke-width="0.9"/></svg>
<svg class="a" style="left:529.2px;top:83.9px;" width="13" height="12" viewBox="0 0 13 12"><path d="M0.5 2 Q7 1 10 10" fill="none" stroke="#555" stroke-width="0.9"/></svg>
<svg class="a" style="left:544.2px;top:83.9px;" width="13" height="12" viewBox="0 0 13 12"><path d="M0.5 9 Q3 0 6 5 Q9 10 11.5 4" fill="none" stroke="#555" stroke-width="0.9"/></svg>
<svg class="a" style="left:558.3px;top:83.9px;" width="13" height="12" viewBox="0 0 13 12"><path d="M7 1 Q5 1 5 3 V4.5 Q5 5.5 4 5.5 Q5 5.5 5 6.5 V8 Q5 10 7 10" fill="none" stroke="#555" stroke-width="0.9"/></svg>
<svg class="a" style="left:573.1px;top:83.9px;" width="13" height="12" viewBox="0 0 13 12"><path d="M5 1 Q7 1 7 3 V4.5 Q7 5.5 8 5.5 Q7 5.5 7 6.5 V8 Q7 10 5 10" fill="none" stroke="#555" stroke-width="0.9"/></svg>
<svg class="a" style="left:588.2px;top:83.9px;" width="13" height="12" viewBox="0 0 13 12"><path d="M6 0.5 L7.5 4 H11.5 L8.3 6.5 L9.5 10.5 L6 8 L2.5 10.5 L3.7 6.5 L0.5 4 H4.5Z" fill="none" stroke="#555" stroke-width="0.9"/></svg>
<svg class="a" style="left:626px;top:52px;" width="22" height="21" viewBox="0 0 22 21"><rect x="7" y="6" width="10" height="10" fill="#e8c56a"/><rect x="1" y="1" width="8.5" height="8.5" fill="#fff" stroke="#666" stroke-width="0.9"/><rect x="11.5" y="11.5" width="9" height="9" fill="#fff" stroke="#666" stroke-width="0.9"/><rect x="2" y="11" width="7" height="7" fill="#e8c56a" opacity="0.9"/></svg>
<div class="t" style="left:618.0px;top:79.2px;font-size:8.6px;color:#2b2b2b;">Organizar</div>
<svg class="a" style="left:634px;top:94px;" width="6" height="4" viewBox="0 0 6 4"><path d="M0.5 0.5 H5.5 L3 3.5Z" fill="#666"/></svg>
<div class="t" style="left:635.5px;top:104.8px;font-size:8.5px;color:#444;">Dibujo</div>
<svg class="a" style="left:666px;top:53px;" width="25" height="23" viewBox="0 0 25 23"><rect x="1" y="1" width="20" height="19" rx="3" fill="#fbf6f8" stroke="#d0c4c8" stroke-width="1"/><path d="M9 20 L20 8 L23 5 L24 7 L12 20Z" fill="#b8b8b8"/><path d="M7 22 Q8 18 11 19 Q11 22 7 22Z" fill="#aaa"/></svg>
<div class="t" style="left:664.7px;top:79.5px;font-size:8.5px;color:#a0a0a0;">Estilos</div>
<div class="t" style="left:659.8px;top:91.1px;font-size:8.5px;color:#a0a0a0;">rápidos</div>
<svg class="a" style="left:689px;top:94px;" width="6" height="4" viewBox="0 0 6 4"><path d="M0.5 0.5 H5.5 L3 3.5Z" fill="#bbb"/></svg>
<svg class="a" style="left:699px;top:51px;" width="12" height="12" viewBox="0 0 12 12"><path d="M2.5 5 L6 1.5 L10.5 6 L7 9.5Z" fill="none" stroke="#aaa" stroke-width="0.9"/><path d="M4 1 V5" stroke="#aaa" stroke-width="0.9"/><rect x="0.5" y="10.5" width="11" height="1.5" fill="#e0e0e0"/></svg>
<div class="t" style="left:712.4px;top:53.7px;font-size:8.6px;color:#a0a0a0;">Relleno de forma</div>
<svg class="a" style="left:781px;top:57px;" width="6" height="4" viewBox="0 0 6 4"><path d="M0.5 0.5 H5.5 L3 3.5Z" fill="#bbb"/></svg>
<svg class="a" style="left:698.5px;top:68px;" width="13" height="12" viewBox="0 0 13 12"><path d="M0.5 2 H8 M0.5 2 V10.5 H9.5 V7" fill="none" stroke="#aaa" stroke-width="0.9"/><path d="M4.5 8 L11 1.5 L12.2 2.7 L5.7 9.2Z" fill="none" stroke="#aaa" stroke-width="0.9"/></svg>
<div class="t" style="left:712.4px;top:70.6px;font-size:8.7px;color:#a0a0a0;">Contorno de forma</div>
<svg class="a" style="left:789px;top:74px;" width="6" height="4" viewBox="0 0 6 4"><path d="M0.5 0.5 H5.5 L3 3.5Z" fill="#bbb"/></svg>
<svg class="a" style="left:698.5px;top:85px;" width="13" height="12" viewBox="0 0 13 12"><path d="M2 10 Q0 8 2 6 L6 2 H11 L11.5 7 L8 10.5Z" fill="#e8e8e8" stroke="#aaa" stroke-width="0.9"/></svg>
<div class="t" style="left:712.4px;top:88.1px;font-size:8.6px;color:#a0a0a0;">Efectos de forma</div>
<svg class="a" style="left:780px;top:91px;" width="6" height="4" viewBox="0 0 6 4"><path d="M0.5 0.5 H5.5 L3 3.5Z" fill="#bbb"/></svg>
<svg class="a" style="left:793px;top:105px;" width="7" height="7" viewBox="0 0 7 7"><path d="M0.5 0.5 H6.5 V6.5 H0.5Z" fill="none" stroke="#aaa" stroke-width="0.7"/><path d="M2.5 2.5 L6 6" stroke="#aaa" stroke-width="0.8"/></svg>
<svg class="a" style="left:806.5px;top:53px;" width="11" height="10" viewBox="0 0 11 10"><circle cx="6.5" cy="3.8" r="3.1" fill="none" stroke="#3b5aa0" stroke-width="1.2"/><path d="M4.3 6 L0.8 9.3" stroke="#3b5aa0" stroke-width="1.5"/></svg>
<div class="t" style="left:820.6px;top:53.7px;font-size:8.3px;color:#2b2b2b;">Buscar</div>
<svg class="a" style="left:806px;top:69px;" width="13" height="12" viewBox="0 0 13 12"><text x="0.5" y="5" font-size="6" fill="#555" font-family="Liberation Sans">ab</text><text x="4" y="11" font-size="6" fill="#3b5aa0" font-family="Liberation Sans">ac</text><path d="M0.5 8 L2.5 10" stroke="#3b5aa0" stroke-width="0.8"/></svg>
<div class="t" style="left:820.6px;top:70.7px;font-size:8.5px;color:#2b2b2b;">Reemplazar</div>
<svg class="a" style="left:872px;top:73.5px;" width="6" height="4" viewBox="0 0 6 4"><path d="M0.5 0.5 H5.5 L3 3.5Z" fill="#666"/></svg>
<svg class="a" style="left:808px;top:86px;" width="9" height="13" viewBox="0 0 9 13"><path d="M1 1 V10.5 L3.5 8.5 L5.5 12 L7 11.3 L5.2 7.8 H8.2Z" fill="#fff" stroke="#555" stroke-width="0.8"/></svg>
<div class="t" style="left:820.6px;top:87.3px;font-size:8.6px;color:#2b2b2b;">Seleccionar</div>
<svg class="a" style="left:866px;top:90px;" width="6" height="4" viewBox="0 0 6 4"><path d="M0.5 0.5 H5.5 L3 3.5Z" fill="#666"/></svg>
<div class="t" style="left:828.0px;top:104.8px;font-size:8.5px;color:#444;">Edición</div>
<svg class="a" style="left:906px;top:54px;" width="22" height="22" viewBox="0 0 22 22"><path d="M1 1 H10 L15 6 V18 H1Z M10 1 V6 H15" fill="#fff" stroke="#6b6fd0" stroke-width="1"/><path d="M4 14 Q6 10 8 4 Q9 10 12 13" fill="none" stroke="#6b6fd0" stroke-width="0.9"/><path d="M12 16 L18 10 M14.5 19.5 Q12 21 11 19 M17 13 Q20 11 18.5 9" fill="none" stroke="#6b6fd0" stroke-width="1.3"/></svg>
<div class="t" style="left:904.3px;top:79.3px;font-size:8.3px;color:#2b2b2b;">Crear</div>
<div class="t" style="left:900.3px;top:91.1px;font-size:8.1px;color:#2b2b2b;">un PDF</div>
<div class="t" style="left:886.5px;top:104.7px;font-size:8.6px;color:#444;">Adobe Acrobat</div>
<svg class="a" style="left:976px;top:106px;" width="9" height="6" viewBox="0 0 9 6"><path d="M1 5 L4.5 1.5 L8 5" fill="none" stroke="#666" stroke-width="1"/></svg>
  <div class="a" style="left:151.4px;top:117.30000000000001px;width:11.099999999999994px;height:376.7px;background:#dadada"></div>
<div class="a" style="left:151.4px;top:117.30000000000001px;width:11.099999999999994px;height:11.199999999999989px;background:#fff;border:1px solid #c3c3c3"></div>
<svg class="a" style="left:152px;top:119px;" width="10" height="8" viewBox="0 0 10 8"><path d="M2 5.5 H8 L5 2.5Z" fill="#444"/></svg>
<div class="a" style="left:151.3px;top:315px;width:11.0px;height:106px;background:#fff;border:1px solid #c3c3c3"></div>
<div class="a" style="left:165px;top:115px;width:1px;height:379px;background:#cfcfcf"></div>
<div class="a" style="left:980px;top:117px;width:10px;height:377px;background:#dadada"></div>
<div class="a" style="left:980px;top:117px;width:11px;height:11.5px;background:#fff;border:1px solid #c3c3c3"></div>
<svg class="a" style="left:980px;top:119px;" width="10" height="8" viewBox="0 0 10 8"><path d="M2 5.5 H8 L5 2.5Z" fill="#444"/></svg>
<div class="a" style="left:980.3px;top:336.3px;width:10.700000000000045px;height:20.19999999999999px;background:#fff;border:1px solid #9a9a9a"></div>
<div class="a" style="left:980px;top:460.5px;width:11px;height:11.5px;background:#fff;border:1px solid #c3c3c3"></div>
<svg class="a" style="left:980px;top:462px;" width="10" height="8" viewBox="0 0 10 8"><path d="M2 2.5 H8 L5 5.5Z" fill="#444"/></svg>
<svg class="a" style="left:980px;top:474px;" width="10" height="20" viewBox="0 0 10 20"><path d="M2 5.5 H8 L5 2.5Z M2 9.5 H8 L5 6.5Z" fill="#666"/><path d="M2 14 H8 L5 17Z M2 18.5 H8" fill="#666" stroke="#666" stroke-width="0.6"/></svg>
<div class="a" style="left:7.7px;top:123.19999999999999px;width:127.99999999999999px;height:73.0px;background:#fff;border:1px solid #c8c8c8;overflow:hidden"></div><svg class="a" style="left:7.7px;top:123.19999999999999px;" width="128" height="73" viewBox="0 0 128 73"><circle cx="11.2" cy="12.1" r="4.3" fill="#b5b5b5" stroke="#ddd" stroke-width="1"/><rect x="20" y="9" width="87" height="4.8" fill="#4f74c8"/><ellipse cx="40.4" cy="18.9" rx="11" ry="3" fill="#9b9b9b"/><ellipse cx="79" cy="20.7" rx="23" ry="4.3" fill="#f2c21a"/><ellipse cx="96.8" cy="28.8" rx="17.5" ry="3.8" fill="#5b8fd0"/><ellipse cx="99.2" cy="38.5" rx="15" ry="3.3" fill="#6aa84f"/><ellipse cx="71.3" cy="49.4" rx="21" ry="5" fill="#ef7d32"/><ellipse cx="29.2" cy="48.5" rx="13" ry="6" fill="#a9d18e"/><rect x="35" y="31" width="16" height="12" fill="#f3e0b8"/><circle cx="38.5" cy="33" r="2" fill="#e0b050"/><circle cx="43" cy="32.5" r="2" fill="#e0b050"/><circle cx="47.5" cy="33" r="2" fill="#e0b050"/><rect x="37" y="36" width="12" height="6" fill="#b8a890"/><path d="M68 19.5 H90 M72 22 H86 M86 28.3 H106 M90 30.8 H103 M90 38 H108 M93 40.5 H105 M60 47 H82 M64 49.5 H80 M62 52 H80 M22 47.5 H37 M23 50 H36" stroke="#555" stroke-width="0.6"/><path d="M37 18.9 H44" stroke="#eee" stroke-width="0.6"/><path d="M51 35 L66 24 M51 36 L80 30 M51 37 L84 38 M51 39 L62 46" stroke="#dde" stroke-width="0.5"/><rect x="100" y="51.5" width="13" height="2" fill="#3aa36b"/><path d="M34 67 H61" stroke="#ccc" stroke-width="0.6"/><path d="M22 11.4 H50 M60 11.4 H98" stroke="#9cb4e8" stroke-width="0.8"/><circle cx="123" cy="51" r="8.5" fill="#d9ecfa"/><circle cx="116" cy="60.5" r="9.5" fill="#1f8ff0"/><circle cx="124" cy="60" r="6.8" fill="#0b6fe0"/></svg>
<div class="a" style="left:7.7px;top:209.5px;width:127.99999999999999px;height:73.0px;background:#fff;border:1px solid #c8c8c8;overflow:hidden"></div><svg class="a" style="left:7.7px;top:209.5px;" width="128" height="73" viewBox="0 0 128 73"><circle cx="11.6" cy="11.9" r="4.3" fill="#b5b5b5" stroke="#ddd" stroke-width="1"/><rect x="17.7" y="4.7" width="17.6" height="19.3" fill="#8cc2a8"/><rect x="24" y="7" width="9" height="8" fill="#5fae8a"/><path d="M18 24 Q20 15 24 17 Q27 19 27 24Z" fill="#1f7a60"/><circle cx="22.5" cy="15" r="2" fill="#2b2b2b"/><rect x="35.8" y="10.7" width="67.7" height="9.7" fill="#4f74c8"/><path d="M50 15.5 H90" stroke="#dfeaff" stroke-width="0.9"/><path d="M20.0 26.5 L33.5 35 V58.5 L30.0 60.8 H20.0 Z" fill="#cfcfcf"/><path d="M36.3 26.5 L49.8 35 V58.5 L46.3 60.8 H36.3 Z" fill="#f6d36e"/><path d="M52.6 26.5 L66.1 35 V58.5 L62.6 60.8 H52.6 Z" fill="#f7c9ad"/><path d="M68.9 26.5 L82.4 35 V58.5 L78.9 60.8 H68.9 Z" fill="#a9d18e"/><path d="M85.2 26.5 L98.7 35 V58.5 L95.2 60.8 H85.2 Z" fill="#c4c4c4"/><path d="M22.0 38.0 H31.0" stroke="#666" stroke-width="0.5"/><path d="M22.0 40.2 H31.0" stroke="#666" stroke-width="0.5"/><path d="M22.0 42.4 H31.0" stroke="#666" stroke-width="0.5"/><path d="M22.0 44.6 H31.0" stroke="#666" stroke-width="0.5"/><path d="M22.0 46.8 H31.0" stroke="#666" stroke-width="0.5"/><path d="M22.0 49.0 H31.0" stroke="#666" stroke-width="0.5"/><path d="M38.3 38.0 H47.3" stroke="#666" stroke-width="0.5"/><path d="M38.3 40.2 H47.3" stroke="#666" stroke-width="0.5"/><path d="M38.3 42.4 H47.3" stroke="#666" stroke-width="0.5"/><path d="M38.3 44.6 H47.3" stroke="#666" stroke-width="0.5"/><path d="M38.3 46.8 H47.3" stroke="#666" stroke-width="0.5"/><path d="M38.3 49.0 H47.3" stroke="#666" stroke-width="0.5"/><path d="M54.6 38.0 H63.6" stroke="#666" stroke-width="0.5"/><path d="M54.6 40.2 H63.6" stroke="#666" stroke-width="0.5"/><path d="M54.6 42.4 H63.6" stroke="#666" stroke-width="0.5"/><path d="M54.6 44.6 H63.6" stroke="#666" stroke-width="0.5"/><path d="M54.6 46.8 H63.6" stroke="#666" stroke-width="0.5"/><path d="M54.6 49.0 H63.6" stroke="#666" stroke-width="0.5"/><path d="M70.9 38.0 H79.9" stroke="#666" stroke-width="0.5"/><path d="M70.9 40.2 H79.9" stroke="#666" stroke-width="0.5"/><path d="M70.9 42.4 H79.9" stroke="#666" stroke-width="0.5"/><path d="M70.9 44.6 H79.9" stroke="#666" stroke-width="0.5"/><path d="M70.9 46.8 H79.9" stroke="#666" stroke-width="0.5"/><path d="M70.9 49.0 H79.9" stroke="#666" stroke-width="0.5"/><path d="M87.2 38.0 H96.2" stroke="#666" stroke-width="0.5"/><path d="M87.2 40.2 H96.2" stroke="#666" stroke-width="0.5"/><path d="M87.2 42.4 H96.2" stroke="#666" stroke-width="0.5"/><path d="M87.2 44.6 H96.2" stroke="#666" stroke-width="0.5"/><path d="M87.2 46.8 H96.2" stroke="#666" stroke-width="0.5"/><path d="M87.2 49.0 H96.2" stroke="#666" stroke-width="0.5"/><path d="M30 67 H60" stroke="#ccc" stroke-width="0.6"/><circle cx="123" cy="51" r="8.5" fill="#d9ecfa"/><circle cx="116" cy="60.5" r="9.5" fill="#1f8ff0"/><circle cx="124" cy="60" r="6.8" fill="#0b6fe0"/></svg>
<div class="a" style="left:5.4px;top:294.0px;width:132.79999999999998px;height:77.79999999999995px;border:2.6px solid #d35230;background:#e6e6e6"></div><div class="a" style="left:8px;top:297.2px;width:128px;height:73.00000000000006px;background:#fff;border:1px solid #c8c8c8;overflow:hidden"></div><svg class="a" style="left:8px;top:297.2px;" width="128" height="73" viewBox="0 0 128 73"><circle cx="11.4" cy="10.2" r="4.3" fill="#b5b5b5" stroke="#ddd" stroke-width="1"/><rect x="18.3" y="4.2" width="12.5" height="12.9" fill="#2aa8d8"/><rect x="18.3" y="11.5" width="12.5" height="5.6" fill="#1b3a9a"/><rect x="32.3" y="5.8" width="57.7" height="6.5" fill="#2e75b6"/><rect x="21.9" y="17.1" width="22.4" height="46" rx="2" fill="#e2ecd9" stroke="#888" stroke-width="0.3"/><rect x="48.8" y="17.1" width="19.4" height="46" rx="2" fill="#fce9c9" stroke="#888" stroke-width="0.3"/><rect x="73.3" y="17.1" width="13.7" height="46" rx="2" fill="#dce6f2" stroke="#888" stroke-width="0.3"/><rect x="88.2" y="19.2" width="11.4" height="34.3" fill="#f3f2f4" stroke="#ddd" stroke-width="0.5"/><path d="M88 63 L104 48 V63Z" fill="#8cc63f"/><path d="M23 22 H35 M23 25 H40 M23 31 H32 M23 34 H33 M23 37 H33 M23 40 H32 M23 43 H33 M23 49 H37 M50 23 H62 M50 26 H62 M50 36 H57 M50 39 H56 M50 42 H57 M50 49 H62 M50 55 H61 M75 21 H81 M75 30 H83 M75 34 H83 M75 38 H83 M75 42 H83 M75 46 H82" stroke="#8a8a8a" stroke-width="0.8"/><path d="M93 24 Q96 32 93 50" stroke="#9a9a9a" stroke-width="3" fill="none"/><path d="M93 50 L96 55 L92 58Z" fill="#d42a2f"/><path d="M45 38 L47.5 39.5 L45 41Z M69.5 38 L72 39.5 L69.5 41Z" fill="#3a4a6b"/><path d="M25 66 H60" stroke="#ccc" stroke-width="0.6"/><circle cx="123" cy="51" r="8.5" fill="#d9ecfa"/><circle cx="116" cy="60.5" r="9.5" fill="#1f8ff0"/><circle cx="124" cy="60" r="6.8" fill="#0b6fe0"/></svg>
<div class="a" style="left:7.7px;top:383px;width:127.99999999999999px;height:73px;background:#fff;border:1px solid #c8c8c8;overflow:hidden"></div><svg class="a" style="left:7.7px;top:383px;" width="128" height="73" viewBox="0 0 128 73"><circle cx="11.7" cy="11" r="4.3" fill="#b5b5b5" stroke="#ddd" stroke-width="1"/><rect x="21.2" y="10.2" width="84.6" height="9.9" fill="#2e75b6"/><path d="M38 13.3 H88 M45 17 H82" stroke="#d8e8f8" stroke-width="1"/><path d="M30 24 H36 V28 L42 30 V35.5 H33 L30 30Z" fill="#7cb86a"/><circle cx="40" cy="27" r="1.8" fill="#c89a70"/><path d="M56 33 L64 24 L67 27 L59 36Z" fill="#c9d88a" stroke="#9ab060" stroke-width="0.5"/><path d="M82 35.5 L86 28 L89 35.5Z" fill="#d09a30"/><rect x="88" y="25" width="4.5" height="10.5" fill="#c8c8c8"/><g stroke="#8a8a8a" stroke-width="0.9"><path d="M22.5 42 H105 M22.5 45.5 H105 M22.5 49 H105 M22.5 52.5 H105 M22.5 56 H70"/></g><path d="M46 45.5 H105 M22.5 49 H40" stroke="#333" stroke-width="1.1"/><path d="M3 67.5 H110" stroke="#cfe2f2" stroke-width="0.6"/><path d="M35 66.5 H60" stroke="#ccc" stroke-width="0.6"/><circle cx="123" cy="51" r="8.5" fill="#d9ecfa"/><circle cx="116" cy="60.5" r="9.5" fill="#1f8ff0"/><circle cx="124" cy="60" r="6.8" fill="#0b6fe0"/></svg>
<div class="a" style="left:7.7px;top:469px;width:127.99999999999999px;height:73px;background:#fff;border:1px solid #c8c8c8;overflow:hidden"></div><svg class="a" style="left:7.7px;top:469px;" width="128" height="73" viewBox="0 0 128 73"><circle cx="11.7" cy="11" r="4.3" fill="#b5b5b5" stroke="#ddd" stroke-width="1"/><path d="M47 11 H83 M22 15.6 H93" stroke="#222" stroke-width="1.1"/><path d="M47 12.5 H83 M22 17 H93" stroke="#333" stroke-width="0.5"/><path d="M22 19.8 H28" stroke="#222" stroke-width="1.2"/><ellipse cx="68" cy="24.5" rx="11" ry="4.5" fill="#5b95d6"/></svg>
<svg class="a" style="left:66px;top:325px;" width="10" height="16" viewBox="0 0 10 16"><path d="M1 1 V12.5 L3.8 10 L6 14.5 L7.8 13.7 L5.7 9.3 H9Z" fill="#fff" stroke="#222" stroke-width="0.9"/></svg>
<div class="a" style="left:238.3px;top:125.19999999999999px;width:671.2px;height:379.8px;background:#fff;box-shadow:0 0 0 1px #d0d0d0"></div>
<svg class="a" style="left:268px;top:155px;" width="58" height="58" viewBox="0 0 58 58"><defs><path id="arcT" d="M7.3 33 A22.3 22.3 0 0 1 51.3 33"/><path id="arcB" d="M16 48.5 A23 23 0 0 0 42.6 48.5"/></defs><circle cx="29.3" cy="29.3" r="26" fill="#fff" stroke="#a8a8a8" stroke-width="0.9"/><circle cx="29.3" cy="29.3" r="18.7" fill="#a0a0a0"/><circle cx="29.3" cy="29.3" r="15" fill="none" stroke="#d8d8d8" stroke-width="0.5"/><text font-size="3.9" font-weight="bold" fill="#6f6f6f" font-family="Liberation Sans" letter-spacing="0"><textPath href="#arcT">CONTRALORÍA GENERAL DEL ESTADO</textPath></text><text font-size="4" font-weight="bold" fill="#6f6f6f" font-family="Liberation Sans" letter-spacing="0.8"><textPath href="#arcB">ECUADOR</textPath></text><path d="M15 28.2 H40 V30.6 H15Z" fill="#fff"/><path d="M43.5 23.5 L48 29.4 L43.5 35.3 L39 29.4Z" fill="#a0a0a0" stroke="#fff" stroke-width="1.3"/><rect x="16" y="30.5" width="1.8" height="3" fill="#fff"/><rect x="19" y="30.5" width="1.4" height="2.2" fill="#fff"/><text x="22" y="36.5" font-size="3" fill="#eee" font-family="Liberation Sans">31 DE 1928</text><circle cx="7.5" cy="37" r="0.7" fill="#999"/><circle cx="51" cy="37" r="0.7" fill="#999"/></svg>
<svg class="a" style="left:329.5px;top:148.10000000000002px;" width="68.3" height="70.6" viewBox="0 0 68.3 70.6"><rect width="68.3" height="70.6" fill="#2aa8dc"/><rect y="47.8" width="68.3" height="22.8" fill="#1f3aa0"/>
<path d="M6.3 18.2 L24.5 13.1 L28.4 42.7 L10.2 48.4Z" fill="#eef2fb"/><path d="M8.3 20.5 L23 16.2 L26.4 41 L11.8 45.8Z" fill="#22306e"/>
<path d="M11 25 L15 24 L17.5 42 L13.5 43Z" fill="#f3d36a"/><path d="M16.5 23.5 L20 22.5 L22.5 40.5 L19 41.5Z" fill="#8fc0f0"/><path d="M20 29 L23.5 28 L25 39 L21.5 40Z" fill="#e9e4d0"/>
<path d="M10.2 48.4 L28.4 42.7 L36.4 50.6 L19.9 63.1Z" fill="#dfe5f3"/><path d="M13.5 48.5 L27.5 44.5 L33 50.5 L20.5 59Z" fill="#a9b6d8"/>
<rect x="27" y="17" width="3" height="9" fill="#cfe3f5"/>
<path d="M2.8 51 H9.8 V61 Q6.3 63 2.8 61Z" fill="#f4f4f4"/><path d="M9.8 53 Q12 53 12 56 Q12 59 9.8 59" stroke="#f4f4f4" fill="none" stroke-width="1"/>
<path d="M4 36 Q7 39 4 42 Q1.5 45 4.5 48" stroke="#a7d8f2" fill="none" stroke-width="1.1"/>
<path d="M43.8 8 V46" stroke="#f2a52c" stroke-width="2.2"/><path d="M32.5 17 Q43.8 11 55 17" stroke="#f2a52c" stroke-width="1.8" fill="none"/><circle cx="43.8" cy="9" r="2.6" fill="#f2a52c"/>
<path d="M32.5 17 L29 34 M32.5 17 L39 34 M55 17 L50 35 M55 17 L60 35" stroke="#f6c46a" stroke-width="0.5"/>
<path d="M28.5 34 Q34 40 39.5 34Z" fill="#f2a52c"/><path d="M49.5 35 Q55 41 60.5 35Z" fill="#f2a52c"/>
<ellipse cx="34" cy="30.5" rx="3" ry="3.6" fill="#f8f3e8"/><path d="M52 26 Q55 22 58 26 V35 H52Z" fill="#2b3f9a"/><circle cx="55" cy="24" r="1.8" fill="#2b3f9a"/><path d="M53.5 30 H56.5" stroke="#f6d890" stroke-width="1"/>
<ellipse cx="43.5" cy="48" rx="8.5" ry="3" fill="#f2a52c"/><rect x="41" y="44" width="5" height="4" fill="#f2a52c"/>
<path d="M59.5 28 V51" stroke="#1a2a66" stroke-width="1.8"/><circle cx="59.5" cy="28" r="2" fill="#2b4fb0"/><ellipse cx="59.5" cy="52" rx="4.5" ry="1.8" fill="#e8eef8"/>
<path d="M46 52 L55 48.5 L59 59 L50 62.5Z" fill="#f5f7fc"/><path d="M48 56 L57 53 M49 58.5 L57.5 55.5" stroke="#a9b9e0" stroke-width="0.5"/>
<path d="M37 62 L38.5 66 M41 63.5 L43 66.5" stroke="#c7d3ee" stroke-width="1.2"/></svg>
<div class="a" style="left:404.9px;top:151.5px;width:311.6px;height:41.10000000000002px;background:#2e75b6"></div>
<div class="t" style="left:479.3px;top:163.3px;font-size:16.2px;color:#fff;transform:scaleX(0.605);transform-origin:0 0;">Art. 12 (LOCGE) Tiempos de Control</div>
<div class="a" style="left:354.4px;top:219.3px;width:115.20000000000005px;height:265.7px;background:#e3edda;border:1px solid #777;border-radius:12px"></div>
<div class="a" style="left:496.3px;top:219.3px;width:104.09999999999997px;height:265.7px;background:#fdeacb;border:1px solid #777;border-radius:12px"></div>
<div class="a" style="left:626.3px;top:219.3px;width:66.10000000000002px;height:265.7px;background:#dde7f3;border:1px solid #777;border-radius:12px"></div>
<div class="t" style="left:360.7px;top:236.8px;font-size:12px;color:#111;font-weight:bold;transform:scaleX(0.706);transform-origin:0 0;">Control Previo</div>
<div class="t" style="left:360.7px;top:255.1px;font-size:12.1px;color:#222;transform:scaleX(0.715);transform-origin:0 0;">Antes de su autorización o</div>
<div class="t" style="left:360.7px;top:268.3px;font-size:12.1px;color:#222;transform:scaleX(0.715);transform-origin:0 0;">ejecución, revisar :</div>
<div class="t" style="left:360.7px;top:303.8px;font-size:12.1px;color:#222;transform:scaleX(0.715);transform-origin:0 0;">- Legalidad</div>
<div class="t" style="left:360.7px;top:321.3px;font-size:12.1px;color:#222;transform:scaleX(0.715);transform-origin:0 0;">- Veracidad</div>
<div class="t" style="left:360.7px;top:338.9px;font-size:12.1px;color:#222;transform:scaleX(0.715);transform-origin:0 0;">- Conveniencia</div>
<div class="t" style="left:360.7px;top:356.4px;font-size:12.1px;color:#222;transform:scaleX(0.715);transform-origin:0 0;">- Oportunidad</div>
<div class="t" style="left:360.7px;top:374.0px;font-size:12.1px;color:#222;transform:scaleX(0.715);transform-origin:0 0;">- Pertinencia</div>
<div class="t" style="left:360.7px;top:391.5px;font-size:12.1px;color:#222;transform:scaleX(0.715);transform-origin:0 0;">- Conformidad</div>
<div class="t" style="left:360.7px;top:429.8px;font-size:12.1px;color:#222;transform:scaleX(0.715);transform-origin:0 0;">Planes y presupuestos</div>
<div class="t" style="left:360.7px;top:442.8px;font-size:12.1px;color:#222;transform:scaleX(0.715);transform-origin:0 0;">institucionales.</div>
<div class="t" style="left:501.4px;top:241.7px;font-size:12px;color:#111;font-weight:bold;transform:scaleX(0.706);transform-origin:0 0;">Control Continuo</div>
<div class="t" style="left:501.4px;top:259.4px;font-size:12.1px;color:#222;transform:scaleX(0.715);transform-origin:0 0;">De forma continua</div>
<div class="t" style="left:501.4px;top:271.3px;font-size:12.1px;color:#222;transform:scaleX(0.715);transform-origin:0 0;">inspeccionarán y</div>
<div class="t" style="left:501.4px;top:282.6px;font-size:12.1px;color:#222;transform:scaleX(0.715);transform-origin:0 0;">constatarán:</div>
<div class="t" style="left:501.4px;top:320.8px;font-size:12.1px;color:#222;transform:scaleX(0.715);transform-origin:0 0;">- Oportunidad</div>
<div class="t" style="left:501.4px;top:338.6px;font-size:12.1px;color:#222;transform:scaleX(0.715);transform-origin:0 0;">- Calidad</div>
<div class="t" style="left:501.4px;top:356.7px;font-size:12.1px;color:#222;transform:scaleX(0.715);transform-origin:0 0;">- Cantidad</div>
<div class="t" style="left:501.4px;top:391.8px;font-size:12.1px;color:#222;transform:scaleX(0.715);transform-origin:0 0;">De obras, bienes y</div>
<div class="t" style="left:501.4px;top:404.5px;font-size:12.1px;color:#222;transform:scaleX(0.715);transform-origin:0 0;">servicios</div>
<div class="t" style="left:501.4px;top:423.2px;font-size:12.1px;color:#222;transform:scaleX(0.715);transform-origin:0 0;">Los términos</div>
<div class="t" style="left:501.4px;top:436.8px;font-size:12.1px;color:#222;transform:scaleX(0.715);transform-origin:0 0;">contractuales y Ley.</div>
<div class="t" style="left:631.0px;top:224.6px;font-size:12px;color:#111;font-weight:bold;transform:scaleX(0.706);transform-origin:0 0;">Control</div>
<div class="t" style="left:631.0px;top:237.2px;font-size:12px;color:#111;font-weight:bold;transform:scaleX(0.706);transform-origin:0 0;">Posterior</div>
<div class="t" style="left:631.0px;top:273.1px;font-size:12.1px;color:#222;transform:scaleX(0.715);transform-origin:0 0;">- Unidad de</div>
<div class="t" style="left:631.0px;top:286.7px;font-size:12.1px;color:#222;transform:scaleX(0.715);transform-origin:0 0;">Auditoría</div>
<div class="t" style="left:631.0px;top:299.7px;font-size:12.1px;color:#222;transform:scaleX(0.715);transform-origin:0 0;">interna ante</div>
<div class="t" style="left:631.0px;top:312.3px;font-size:12.1px;color:#222;transform:scaleX(0.715);transform-origin:0 0;">las</div>
<div class="t" style="left:631.0px;top:326.0px;font-size:12.1px;color:#222;transform:scaleX(0.715);transform-origin:0 0;">respectivas</div>
<div class="t" style="left:631.0px;top:338.9px;font-size:12.1px;color:#222;transform:scaleX(0.715);transform-origin:0 0;">autoridades,</div>
<div class="t" style="left:631.0px;top:350.8px;font-size:12.1px;color:#222;transform:scaleX(0.715);transform-origin:0 0;">con</div>
<div class="t" style="left:631.0px;top:365.2px;font-size:12.1px;color:#222;transform:scaleX(0.715);transform-origin:0 0;">posterioridad</div>
<div class="t" style="left:631.0px;top:377.2px;font-size:12.1px;color:#222;transform:scaleX(0.715);transform-origin:0 0;">a su</div>
<div class="t" style="left:631.0px;top:389.1px;font-size:12.1px;color:#222;transform:scaleX(0.715);transform-origin:0 0;">ejecución.</div>
<svg class="a" style="left:476px;top:334.5px;" width="14" height="22" viewBox="0 0 14 22"><path d="M0 4 H7 V0 L14 11 L7 22 V18 H0Z" fill="#3b4a6b"/></svg>
<svg class="a" style="left:606px;top:334.5px;" width="14" height="22" viewBox="0 0 14 22"><path d="M0 4 H7 V0 L14 11 L7 22 V18 H0Z" fill="#3b4a6b"/></svg>
<div class="a" style="left:702px;top:225px;width:58.5px;height:197.5px;background:#fff;border-radius:8px;box-shadow:0 0 2.5px rgba(0,0,0,0.3)"></div>
<div class="a" style="left:705.5px;top:229.5px;width:52.0px;height:190.0px;background:#f2f1f5;border-radius:5px 2px 2px 5px"></div>
<svg class="a" style="left:704px;top:229px;" width="56" height="192" viewBox="0 0 56 192"><path d="M34 6 Q46 0 52 10 Q55 22 53 45 Q53 70 51 86 L44 84 Q38 60 34 44 Q28 24 34 6Z" fill="#8c3420"/>
<path d="M33 20 Q40 14 47 22 Q48 36 46 46 Q42 52 37 50 Q32 42 32 30Z" fill="#f7d6c2"/><path d="M32 22 Q36 8 48 12 Q44 20 36 26Z" fill="#8c3420"/>
<path d="M35 32 L38 31.5 M41 31 L44 31" stroke="#333" stroke-width="1.3"/><path d="M37 41 Q40 44 43 41" stroke="#c0392b" fill="none" stroke-width="1.1"/>
<path d="M2.5 13 Q1.5 7 4.5 6.5 Q8.5 6 9.5 11 L9.5 19 L5 20Z" fill="#f5c89a"/><path d="M5 19 L9.5 18.5 L10 36 L6 36Z" fill="#f7d0b0"/>
<path d="M4.5 36 L12 35 L13 44 L5 45Z" fill="#b9cfee"/>
<path d="M4.5 42 L13 39 L46 70 L38 79Z" fill="#9da1a6"/>
<path d="M36 68 Q46 64 48 74 Q50 100 45.5 141 L26 141 Q22 118 24.5 96 Q26 80 36 68Z" fill="#9ea2a6"/><path d="M24.5 96 Q28 84 36 78 L38 104 L28 110Z" fill="#b3b6ba"/>
<path d="M11.5 90 Q11 84 15 85 Q20 86 23.5 92 L23 103 Q17 104 14 99Z" fill="#f5c070"/><path d="M22.5 95 L29 94 L30 111 L24 111Z" fill="#93a8c8"/>
<rect x="29" y="124" width="6" height="6" fill="#7a7d82"/>
<path d="M26 141 L45.5 141 Q46 160 40 168 L28.5 180 Q26 160 26 141Z" fill="#d8232e"/><path d="M26 141 L33 141 L31 170 L28.5 180 Q26 160 26 141Z" fill="#b51a24"/></svg>
<svg class="a" style="left:690px;top:383px;" width="100" height="70" viewBox="0 0 100 70"><defs><linearGradient id="lg1" x1="0" y1="0" x2="0" y2="1"><stop offset="0" stop-color="#a6d44a"/><stop offset="1" stop-color="#8dc83c"/></linearGradient></defs><path d="M96.1 2.3 V69.6 H56Z" fill="url(#lg1)"/><path d="M81.6 44 L42 69.6 H96.1 V60Z" fill="#5fb534"/><path d="M81.6 44 L48 69.6 H68Z" fill="#2f9a2f"/><path d="M10 69.6 L18 55 L56 62 L46 69.6Z" fill="#3bb58f"/><path d="M18 55 L26 69.6 H10Z" fill="#1f8f6e"/><path d="M2 69.6 L6 64 L12 69.6Z" fill="#9ccf5a"/></svg>
<div class="a" style="left:300px;top:452.29999999999995px;width:500px;height:32.700000000000045px;background:#fff"></div>
<div class="t" style="left:415.5px;top:476.0px;font-size:8.5px;color:#666;letter-spacing:-0.42px">CONTRALORÍA GENERAL DEL ESTADO</div>
<div class="a" style="left:238.5px;top:488px;width:586.5px;height:1.2000000000000455px;background:#a3c9e8"></div>
<div class="a" style="left:238.3px;top:125.19999999999999px;width:671.2px;height:400px;overflow:hidden"><svg class="a" style="left:0px;top:0px;" width="671.2" height="400" viewBox="0 0 671.2 400"><defs><radialGradient id="rg1" cx="0.4" cy="0.35" r="0.75"><stop offset="0" stop-color="#3298f2"/><stop offset="1" stop-color="#1f86ec"/></radialGradient><clipPath id="mc"><circle cx="619.7" cy="319.3" r="49"/></clipPath></defs><circle cx="653.7" cy="271.8" r="40.5" fill="#dcedfb"/><circle cx="619.7" cy="319.3" r="49" fill="url(#rg1)"/><circle cx="658.7" cy="319.8" r="45" fill="#3aa1f4" opacity="0.45"/><circle cx="658.7" cy="319.8" r="45" fill="#3ea4f5" clip-path="url(#mc)"/><circle cx="663.7" cy="317.3" r="33.8" fill="#0c70e8"/><g stroke="#8cc8fb" stroke-width="0.6" fill="none" opacity="0.45"><path d="M578 305 H655 M572 338 H668 M600 290 H662 M585 358 H662"/><path d="M600 330 q5 -6 10 0 q-5 6 -10 0 M640 300 q5 -6 10 0 q-5 6 -10 0 M645 352 q5 -6 10 0 q-5 6 -10 0"/></g></svg></div>
</div>
<div id="bot" class="a">
<svg class="a" style="left:20px;top:8px;" width="28" height="28" viewBox="0 0 28 28"><rect x="9.8" y="2.5" width="8.6" height="13" rx="4.3" fill="none" stroke="#fff" stroke-width="1.4"/><path d="M6.3 12 Q6.3 20.5 14.1 20.5 Q21.8 20.5 21.8 12 M14.1 20.5 V24 M9.5 24.8 H18.7" fill="none" stroke="#fff" stroke-width="1.4"/><path d="M2.4 24.8 L25.7 3" stroke="#e0245e" stroke-width="2.2"/></svg>
<svg class="a" style="left:61px;top:18px;" width="10" height="7" viewBox="0 0 10 7"><path d="M1.3 5.5 L5 1.8 L8.7 5.5" fill="none" stroke="#cfcfcf" stroke-width="1.3"/></svg>
<div class="t" style="left:18.6px;top:39.0px;font-size:12.2px;color:#c6c6c6;">Audio</div>
<svg class="a" style="left:113px;top:8px;" width="28" height="28" viewBox="0 0 28 28"><rect x="2.2" y="7.6" width="16" height="12.9" rx="2" fill="none" stroke="#fff" stroke-width="1.4"/><path d="M18.2 12 L25.9 7.6 V20.5 L18.2 16" fill="none" stroke="#fff" stroke-width="1.4"/><path d="M2.2 25.6 L25.5 3" stroke="#e0245e" stroke-width="2.2"/></svg>
<svg class="a" style="left:160px;top:18px;" width="10" height="7" viewBox="0 0 10 7"><path d="M1.3 5.5 L5 1.8 L8.7 5.5" fill="none" stroke="#cfcfcf" stroke-width="1.3"/></svg>
<div class="t" style="left:111.4px;top:39.1px;font-size:12px;color:#c6c6c6;">Video</div>
<svg class="a" style="left:263px;top:12px;" width="22" height="21" viewBox="0 0 22 21"><circle cx="7.1" cy="4.8" r="2.4" fill="none" stroke="#fff" stroke-width="1.3"/><circle cx="13.5" cy="7.9" r="2.8" fill="none" stroke="#fff" stroke-width="1.3"/><path d="M6.5 17.5 H3.8 Q2.3 17.5 2.5 15.5 Q3 11 7 10.5 Q8.5 10.5 9.5 11" fill="none" stroke="#fff" stroke-width="1.3"/><rect x="9.2" y="13" width="9.8" height="5.2" rx="2.6" fill="none" stroke="#fff" stroke-width="1.3"/></svg>
<div class="t" style="left:289.0px;top:13.7px;font-size:12.4px;color:#bcc2c8;">493</div>
<svg class="a" style="left:321px;top:18px;" width="10" height="7" viewBox="0 0 10 7"><path d="M1.3 5.5 L5 1.8 L8.7 5.5" fill="none" stroke="#cfcfcf" stroke-width="1.3"/></svg>
<div class="t" style="left:242.3px;top:39.4px;font-size:11.75px;color:#c6c6c6;">Participants</div>
<svg class="a" style="left:370px;top:11px;" width="22" height="23" viewBox="0 0 22 23"><path d="M5 5.5 Q5.5 2.5 9 2.3 H16 Q19.5 2.5 19.5 6" fill="none" stroke="#fff" stroke-width="1.3"/><path d="M5 6.5 H14.5 Q18.5 6.5 18.5 10.5 V13.5 Q18.5 17.5 14.5 17.5 H9.5 L7.8 21.5 L7 17.5 H5 Q1.5 17.5 1.5 13.5 V10.5 Q1.5 6.5 5 6.5Z" fill="#000" stroke="#fff" stroke-width="1.3"/><circle cx="6.5" cy="12" r="1.1" fill="#fff"/><circle cx="10" cy="12" r="1.1" fill="#fff"/><circle cx="13.5" cy="12" r="1.1" fill="#fff"/></svg>
<div class="a" style="left:387.2px;top:7.2000000000000455px;width:26.400000000000034px;height:16.799999999999955px;background:#e5342f;border:1px solid #fff;border-radius:8.5px"></div>
<div class="t" style="left:390.2px;top:9.9px;font-size:11px;color:#fff;letter-spacing:0.1px;-webkit-text-stroke:0.25px #fff">99+</div>
<svg class="a" style="left:412px;top:18px;" width="10" height="7" viewBox="0 0 10 7"><path d="M1.3 5.5 L5 1.8 L8.7 5.5" fill="none" stroke="#cfcfcf" stroke-width="1.3"/></svg>
<div class="t" style="left:371.8px;top:40.0px;font-size:11px;color:#c6c6c6;">Chat</div>
<svg class="a" style="left:461px;top:9px;" width="22" height="26" viewBox="0 0 22 26"><path d="M6 15 V5.5 Q6 3.5 7.7 3.5 Q9.4 3.5 9.4 5.5 V12 M9.4 12 V3 Q9.4 1 11.1 1 Q12.8 1 12.8 3 V12 M12.8 12 V4 Q12.8 2 14.5 2 Q16.2 2 16.2 4 V13 L17.8 10.8 Q19.3 9.2 20.6 10.3 Q21.6 11.3 20.5 13 L16.5 19.8 Q14.2 23.8 10.3 23.8 Q6 23.8 3.8 19.8 Q2.5 17 2.5 14.5 V8.5 Q2.5 6.5 4.2 6.5 Q6 6.5 6 8.5" fill="none" stroke="#fff" stroke-width="1.4"/></svg>
<div class="t" style="left:443.6px;top:39.9px;font-size:11.1px;color:#c6c6c6;">Raise hand</div>
<div class="a" style="left:552.8px;top:12px;width:24.40000000000009px;height:19.799999999999955px;background:#23e08a;border-radius:3.5px"></div>
<svg class="a" style="left:559px;top:16px;" width="12" height="13" viewBox="0 0 12 13"><path d="M6 12 V3 M1.8 6.8 L6 2.4 L10.2 6.8" fill="none" stroke="#000" stroke-width="2.1"/></svg>
<div class="t" style="left:550.3px;top:39.9px;font-size:11.1px;color:#c6c6c6;">Share</div>
<svg class="a" style="left:647px;top:8px;" width="28" height="27" viewBox="0 0 28 27"><path d="M11.5 4.5 Q13 12.5 22 14 Q13 15.5 11.5 24 Q10 15.5 2 14 Q10 12.5 11.5 4.5Z" fill="none" stroke="#f2c14e" stroke-width="1.5" stroke-linejoin="round"/><path d="M21 1.8 Q21.7 5.3 25 6 Q21.7 6.7 21 10.2 Q20.3 6.7 17 6 Q20.3 5.3 21 1.8Z" fill="#f2c14e"/></svg>
<div class="t" style="left:621.8px;top:39.0px;font-size:12.2px;color:#c6c6c6;">AI Companion</div>
<svg class="a" style="left:735px;top:10px;" width="25" height="24" viewBox="0 0 25 24"><path d="M2 10 V6 Q2 2 6 2 H10" fill="none" stroke="#fff" stroke-width="1.5"/><circle cx="18.5" cy="6" r="3.6" fill="none" stroke="#fff" stroke-width="1.5"/><circle cx="6" cy="18" r="3.6" fill="none" stroke="#fff" stroke-width="1.5"/><path d="M22.5 14 V18 Q22.5 22 18.5 22 H14.5" fill="none" stroke="#fff" stroke-width="1.5"/></svg>
<div class="t" style="left:733.6px;top:39.3px;font-size:11.8px;color:#c6c6c6;">Apps</div>
<svg class="a" style="left:815px;top:8px;" width="28" height="28" viewBox="0 0 28 28"><circle cx="14" cy="14" r="11.6" fill="none" stroke="#fff" stroke-width="1.5"/><circle cx="9.2" cy="14" r="1.35" fill="#fff"/><circle cx="14" cy="14" r="1.35" fill="#fff"/><circle cx="18.8" cy="14" r="1.35" fill="#fff"/></svg>
<div class="t" style="left:815.4px;top:39.0px;font-size:12.2px;color:#c6c6c6;">More</div>
<svg class="a" style="left:931px;top:8px;" width="28" height="28" viewBox="0 0 28 28"><path d="M9.9 2.1 H24.9 V22" fill="none" stroke="#e0245e" stroke-width="1.3"/><path d="M18.1 6.2 L24.9 2.1 V22 L18.1 24.8Z" fill="none" stroke="#e0245e" stroke-width="1.3" stroke-linejoin="round"/><circle cx="10.4" cy="7.6" r="3.2" fill="none" stroke="#fff" stroke-width="1.3"/><path d="M7.2 12 Q10.5 10.8 13.6 12 L16.2 15.2 L14.6 16.6 L12.6 14.6 L12.9 18.6 L14.6 24.6 L11.9 25.4 L10 20.4 L7.6 25.4 L4.6 24.6 L7.2 18.6 V14.6 L4.2 16.6 L2.8 15.2Z" fill="none" stroke="#fff" stroke-width="1.2" stroke-linejoin="round"/></svg>
<div class="t" style="left:930.0px;top:40.2px;font-size:10.8px;color:#c6c6c6;">Leave</div>
</div>
</body></html>
